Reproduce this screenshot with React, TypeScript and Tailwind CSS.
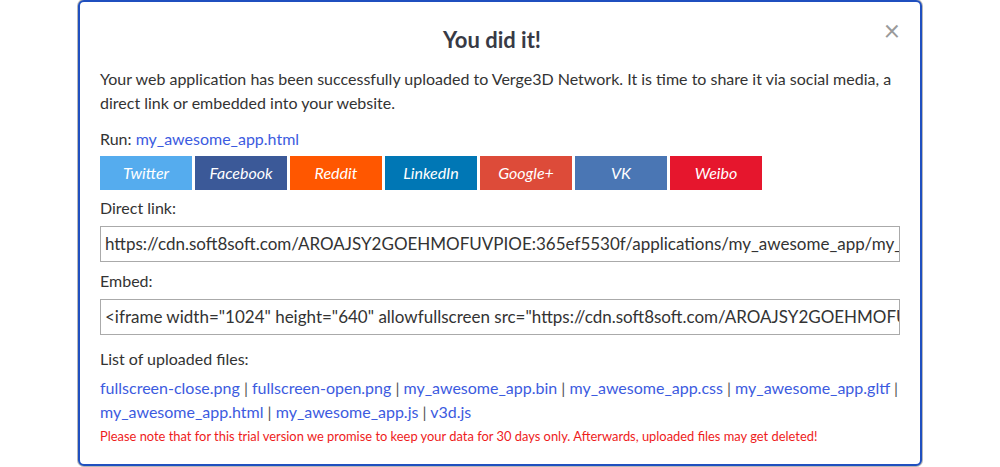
const SHARE = [
  { label: "Twitter", bg: "bg-[#55acee]" },
  { label: "Facebook", bg: "bg-[#3b5998]" },
  { label: "Reddit", bg: "bg-[#ff5700]" },
  { label: "LinkedIn", bg: "bg-[#0077b5]" },
  { label: "Google+", bg: "bg-[#dd4b39]" },
  { label: "VK", bg: "bg-[#4a76b4]" },
  { label: "Weibo", bg: "bg-[#e6162d]" },
];

const FILES = [
  "fullscreen-close.png",
  "fullscreen-open.png",
  "my_awesome_app.bin",
  "my_awesome_app.css",
  "my_awesome_app.gltf",
  "my_awesome_app.html",
  "my_awesome_app.js",
  "v3d.js",
];

const DIRECT =
  "https://cdn.soft8soft.com/AROAJSY2GOEHMOFUVPIOE:365ef5530f/applications/my_awesome_app/my_awesome_app.html";
const EMBED =
  '<iframe width="1024" height="640" allowfullscreen src="https://cdn.soft8soft.com/AROAJSY2GOEHMOFUVPIOE:365ef5530f/applications/my_awesome_app/my_awesome_app.html"></iframe>';

export default function App() {
  return (
    <div className="h-[467px] w-[1000px] overflow-hidden bg-white font-['Lato','Liberation_Sans',sans-serif] text-[#333]">
      <div className="relative mx-auto h-[466px] w-[844px] rounded-md border-2 border-[#1f4fbf] bg-white px-[20px] shadow-[0_0_0_1px_#b8b8b8]">
        <button className="absolute right-[20px] top-[14px] text-[28px] leading-none text-[#9a9a9a]">
          ×
        </button>
        <h2 className="pr-[16px] pt-[24px] text-center text-[22px] font-bold leading-[28px] text-[#383a45]">
          You did it!
        </h2>
        <p className="mt-[13px] text-[16px] leading-[24px]">
          Your web application has been successfully uploaded to Verge3D Network. It is time to share it via social
          media, a direct link or embedded into your website.
        </p>

        <div className="mt-[13px] text-[16px] leading-[22px]">
          Run: <a className="text-[#3c5be0]">my_awesome_app.html</a>
        </div>
        <div className="mt-[6px] flex gap-[3px]">
          {SHARE.map((s) => (
            <div
              key={s.label}
              className={`flex h-[34px] w-[92px] items-center justify-center text-[16px] italic text-white ${s.bg}`}
            >
              {s.label}
            </div>
          ))}
        </div>

        <div className="mt-[7px] text-[16px] leading-[22px]">Direct link:</div>
        <div className="mt-[7px] h-[36px] w-[800px] overflow-hidden whitespace-nowrap border border-[#aaa] px-[4px] text-[17px] leading-[34px]">
          {DIRECT}
        </div>

        <div className="mt-[8px] text-[16px] leading-[22px]">Embed:</div>
        <div className="mt-[7px] h-[36px] w-[800px] overflow-hidden whitespace-nowrap border border-[#aaa] px-[4px] text-[17px] leading-[34px]">
          {EMBED}
        </div>

        <div className="mt-[13px] text-[16px] leading-[22px]">List of uploaded files:</div>
        <div className="mt-[6px] text-[16px] leading-[24px]">
          {FILES.map((f, i) => (
            <span key={f}>
              <a className="text-[#3c5be0]">{f}</a>
              {i < FILES.length - 1 && <span className="text-[#555]"> | </span>}
            </span>
          ))}
        </div>
        <div className="text-[12.9px] leading-[24px] text-[#ee1c1c]">
          Please note that for this trial version we promise to keep your data for 30 days only. Afterwards, uploaded
          files may get deleted!
        </div>
      </div>
    </div>
  );
}
